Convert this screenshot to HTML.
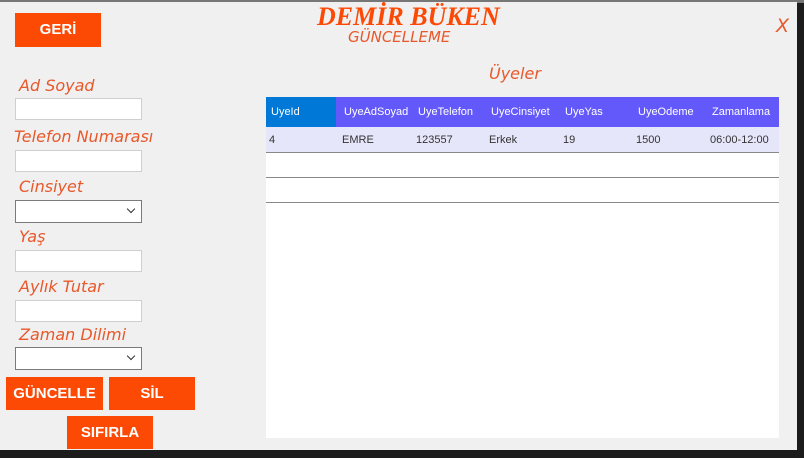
<!DOCTYPE html><html><head><style>
body{margin:0;width:804px;height:458px;background:#1c1c1c;position:relative;overflow:hidden;font-family:"Liberation Sans",sans-serif}
.win{position:absolute;left:0;top:2px;width:797px;height:448px;background:#f0f0f0}
.a{position:absolute}
.lbl{position:absolute;color:#e8582a;font-style:italic;font-size:16px;font-family:"DejaVu Sans",sans-serif;font-weight:300}
.inp{position:absolute;left:15px;width:125px;height:20px;background:#fff;border:1px solid #cfcfcf}
.sel{position:absolute;left:15px;width:125px;height:21px;background:#fff;border:1px solid #7a7a7a}
.sel:after{content:"";position:absolute;right:7px;top:5px;width:5px;height:5px;border-right:1px solid #333;border-bottom:1px solid #333;transform:rotate(45deg)}
.btn{position:absolute;background:#fc4a05;color:#fff;font-weight:bold;font-size:15px;text-align:center;font-family:"Liberation Sans",sans-serif}
.g{position:absolute;font-size:11px;color:#fff;top:0;line-height:30px}
.r{position:absolute;font-size:11px;color:#333;line-height:25px}
.ln{position:absolute;left:0;width:513px;height:1px;background:#888}
</style></head><body>
<div class="a" style="left:0;top:0;width:804px;height:3px;background:#777"></div>
<div class="win">
<div class="btn" style="left:15px;top:11px;width:86px;height:34px;line-height:34px">GERİ</div>
<div class="a" style="left:317px;top:0px;font-family:'Liberation Serif',serif;font-weight:bold;font-style:italic;font-size:26px;color:#fc4a05">DEMİR BÜKEN</div>
<div class="lbl" style="left:348px;top:26px;font-size:15px">GÜNCELLEME</div>
<div class="lbl" style="left:776px;top:13px;font-size:19px">X</div>
<div class="lbl" style="left:489px;top:62px">Üyeler</div>
<div class="lbl" style="left:19px;top:74px">Ad Soyad</div>
<div class="inp" style="top:96px"></div>
<div class="lbl" style="left:14px;top:125px">Telefon Numarası</div>
<div class="inp" style="top:148px"></div>
<div class="lbl" style="left:19px;top:175px">Cinsiyet</div>
<div class="sel" style="top:198px"></div>
<div class="lbl" style="left:19px;top:225px">Yaş</div>
<div class="inp" style="top:248px"></div>
<div class="lbl" style="left:19px;top:275px">Aylık Tutar</div>
<div class="inp" style="top:298px"></div>
<div class="lbl" style="left:19px;top:323px">Zaman Dilimi</div>
<div class="sel" style="top:345px"></div>
<div class="btn" style="left:6px;top:375px;width:97px;height:33px;line-height:33px">GÜNCELLE</div>
<div class="btn" style="left:109px;top:375px;width:86px;height:33px;line-height:33px">SİL</div>
<div class="btn" style="left:67px;top:414px;width:86px;height:33px;line-height:33px">SIFIRLA</div>
<div class="a" style="left:266px;top:95px;width:513px;height:341px;background:#fff">
<div class="a" style="left:0;top:0;width:513px;height:30px;background:#6359fa"></div>
<div class="a" style="left:0;top:0;width:70px;height:30px;background:#0078d7"></div>
<div class="g" style="left:5px">UyeId</div><div class="g" style="left:78px">UyeAdSoyad</div><div class="g" style="left:152px">UyeTelefon</div><div class="g" style="left:225px">UyeCinsiyet</div><div class="g" style="left:299px">UyeYas</div><div class="g" style="left:372px">UyeOdeme</div><div class="g" style="left:446px">Zamanlama</div>
<div class="a" style="left:0;top:30px;width:513px;height:25px;background:#e6e6fa"></div>
<div class="r" style="left:3px;top:31px">4</div><div class="r" style="left:76px;top:31px">EMRE</div><div class="r" style="left:150px;top:31px">123557</div><div class="r" style="left:223px;top:31px">Erkek</div><div class="r" style="left:297px;top:31px">19</div><div class="r" style="left:370px;top:31px">1500</div><div class="r" style="left:444px;top:31px">06:00-12:00</div>
<div class="ln" style="top:55px"></div><div class="ln" style="top:80px"></div><div class="ln" style="top:105px"></div>
</div>
</div>
</body></html>
